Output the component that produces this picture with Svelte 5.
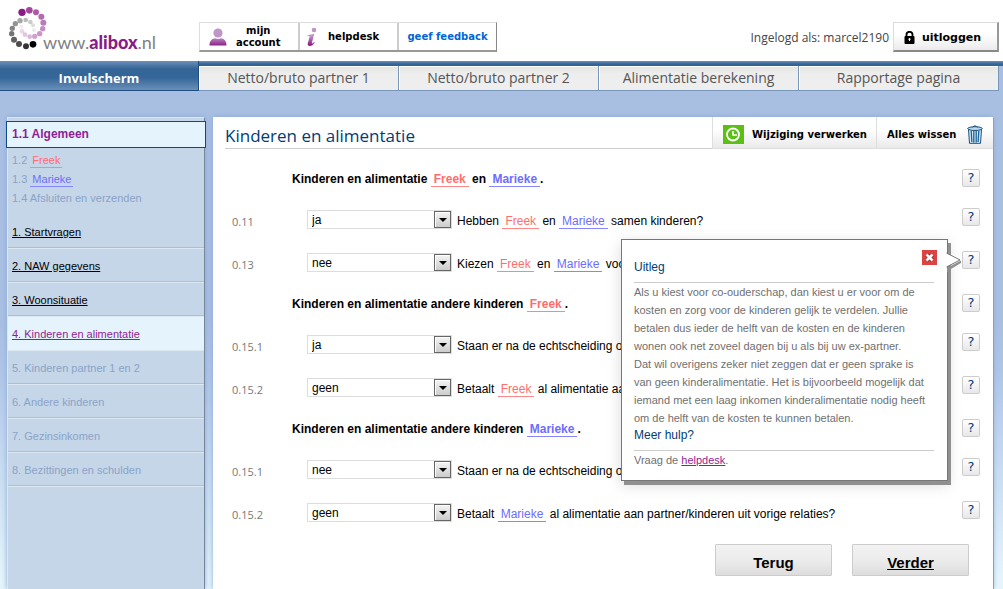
<script>
  const tabs = ['Netto/bruto partner 1', 'Netto/bruto partner 2', 'Alimentatie berekening', 'Rapportage pagina'];

  const steps = [
    { label: '1. Startvragen', state: 'done' },
    { label: '2. NAW gegevens', state: 'done' },
    { label: '3. Woonsituatie', state: 'done' },
    { label: '4. Kinderen en alimentatie', state: 'current' },
    { label: '5. Kinderen partner 1 en 2', state: 'locked' },
    { label: '6. Andere kinderen', state: 'locked' },
    { label: '7. Gezinsinkomen', state: 'locked' },
    { label: '8. Bezittingen en schulden', state: 'locked' }
  ];

  const answers = ['ja', 'nee', 'geen'];

  // Text parts written as {Name} are drawn as partner tags.
  const sections = [
    {
      title: ['Kinderen en alimentatie ', '{Freek}', ' en ', '{Marieke}', '.'],
      questions: [
        { nr: '0.11', value: 'ja', text: ['Hebben ', '{Freek}', ' en ', '{Marieke}', ' samen kinderen?'] },
        { nr: '0.13', value: 'nee', text: ['Kiezen ', '{Freek}', ' en ', '{Marieke}', ' voor co-ouderschap?'], open: true }
      ]
    },
    {
      title: ['Kinderen en alimentatie andere kinderen ', '{Freek}', '.'],
      questions: [
        { nr: '0.15.1', value: 'ja', text: ['Staan er na de echtscheiding op uw adres kinderen ingeschreven?'] },
        { nr: '0.15.2', value: 'geen', text: ['Betaalt ', '{Freek}', ' al alimentatie aan partner/kinderen uit vorige relaties?'] }
      ]
    },
    {
      title: ['Kinderen en alimentatie andere kinderen ', '{Marieke}', '.'],
      questions: [
        { nr: '0.15.1', value: 'nee', text: ['Staan er na de echtscheiding op uw adres kinderen ingeschreven?'] },
        { nr: '0.15.2', value: 'geen', text: ['Betaalt ', '{Marieke}', ' al alimentatie aan partner/kinderen uit vorige relaties?'] }
      ]
    }
  ];

  let showHelp = $state(true);

  const purpleDots = [
    [66, 37, 11, 1], [88, 31, 10, 0.8], [108, 37, 9, 0.72], [124, 50, 9, 0.65], [130, 68, 9, 0.58],
    [128, 86, 8, 0.5], [119, 101, 8, 0.45], [104, 109, 8, 0.4], [89, 110, 7, 0.32], [75, 104, 7, 0.25],
    [66, 94, 7, 0.18], [64, 80, 6, 0.1]
  ];
  const greyDots = [
    [99, 133, 10, 1], [78, 139, 9, 0.8], [57, 132, 9, 0.7], [42, 119, 9, 0.62], [35, 101, 8, 0.55],
    [37, 85, 8, 0.48], [46, 71, 8, 0.42], [60, 62, 8, 0.35], [77, 60, 7, 0.27], [91, 66, 7, 0.2],
    [99, 76, 6, 0.14], [102, 90, 6, 0.08]
  ];
</script>

{#snippet rich(parts)}
  {#each parts as part}{#if part.startsWith('{')}<span class="tag {part.slice(1, -1).toLowerCase()}">{part.slice(1, -1)}</span>{:else}{part}{/if}{/each}
{/snippet}

<div class="page">
  <header class="top">
    <a class="logo" href="#home">
      <svg viewBox="24 18 120 132" width="40" height="44" aria-hidden="true">
        {#each purpleDots as [x, y, r, o]}<circle cx={x} cy={y} {r} fill="#8a1a86" opacity={o} />{/each}
        {#each greyDots as [x, y, r, o]}<circle cx={x} cy={y} {r} fill="#000" opacity={o} />{/each}
      </svg>
      <span class="site">www.<b>alibox</b>.nl</span>
    </a>
    <div class="links">
      <a class="account" href="#account">
        <svg viewBox="0 0 18 18" width="18" height="18" aria-hidden="true">
          <defs>
            <linearGradient id="violet" x1="0" y1="0" x2="0" y2="18" gradientUnits="userSpaceOnUse">
              <stop offset="0.5" stop-color="#bf96c6" /><stop offset="1" stop-color="#8a1a86" />
            </linearGradient>
          </defs>
          <circle cx="9" cy="5" r="4.6" fill="url(#violet)" />
          <path d="M0.5 17.5C0.5 12.5 3 10.6 6 10.2Q9 11.8 12 10.2C15 10.6 17.5 12.5 17.5 17.5Z" fill="url(#violet)" />
        </svg>
        <span>mijn<br />account</span>
      </a>
      <a class="help-desk" href="#helpdesk">
        <svg viewBox="0 0 12 20" width="12" height="20" aria-hidden="true">
          <circle cx="8" cy="3" r="2.3" fill="#bf96c6" />
          <path d="M1.5 8.2L8.3 6.8L5.8 16.2C5.7 17 6.6 16.6 8.1 14.9L8.8 15.4C7.2 17.8 5.5 18.9 3.6 18.9C1.9 18.9 1.4 17.8 1.8 16.3L3.6 9.8C3.8 9 3.3 8.8 1.4 8.9Z" fill="url(#violet)" />
        </svg>
        <span>helpdesk</span>
      </a>
      <a class="feedback" href="#feedback">geef feedback</a>
    </div>
    <span class="user">Ingelogd als: marcel2190</span>
    <button class="logout" type="button">
      <svg viewBox="0 0 11 13" width="11" height="13" aria-hidden="true">
        <path d="M2.5 6V3.8A3 3 0 0 1 8.5 3.8V6" fill="none" stroke="#000" stroke-width="1.8" />
        <rect x="0.5" y="5" width="10" height="8" rx="1" />
        <path d="M5.5 7v3M4.3 8.2h2.4" stroke="#fff" stroke-width="1" />
      </svg>
      uitloggen
    </button>
  </header>

  <nav class="tabs">
    <a class="active" href="#invul">Invulscherm</a>
    {#each tabs as tab}<a href="#tab">{tab}</a>{/each}
  </nav>

  <div class="body">
    <aside>
      <a class="general" href="#algemeen">1.1 Algemeen</a>
      <ul class="sub">
        <li>1.2 <span class="tag freek">Freek</span></li>
        <li>1.3 <span class="tag marieke">Marieke</span></li>
        <li>1.4 Afsluiten en verzenden</li>
      </ul>
      <ul class="steps">
        {#each steps as step}
          <li class={step.state}>
            {#if step.state === 'locked'}{step.label}{:else}<a href="#stap">{step.label}</a>{/if}
          </li>
        {/each}
      </ul>
    </aside>

    <main>
      <div class="head">
        <h1>Kinderen en alimentatie</h1>
        <button class="process" type="button">
          <svg viewBox="0 0 21 19" width="21" height="19" aria-hidden="true">
            <rect width="21" height="19" fill="#5bbf14" />
            <circle cx="10" cy="9.5" r="6" fill="none" stroke="#fff" stroke-width="1.8" />
            <path d="M10 6v4h4" fill="none" stroke="#fff" stroke-width="1.6" />
          </svg>
          Wijziging verwerken
        </button>
        <button class="clear" type="button">
          Alles wissen
          <svg viewBox="0 0 16 19" width="16" height="19" aria-hidden="true">
            <path d="M1.5 4.5L2.5 18.3H13.5L14.5 4.5Z" fill="#d9eaf6" stroke="#174f7d" />
            <path d="M4.2 6L4.9 17M6.8 6V17.5M9.2 6V17.5M11.8 6L11.1 17" stroke="#1c6299" stroke-width="1.3" />
            <ellipse cx="8" cy="3.6" rx="7.3" ry="1.9" fill="#b9d6ea" stroke="#174f7d" />
            <path d="M5.5 2.5Q8 -0.8 10.5 2.5" fill="none" stroke="#174f7d" />
          </svg>
        </button>
      </div>

      <form onsubmit={(e) => e.preventDefault()}>
        {#each sections as section, s}
          <div class="row title">
            <h2>{@render rich(section.title)}</h2>
            <div class="hint"><button type="button" aria-label="Uitleg">?</button></div>
          </div>
          {#each section.questions as q, i}
            <div class="row">
              <span class="nr">{q.nr}</span>
              <span class="pick">
                <select id="q{s}{i}" value={q.value}>
                  {#each answers as answer}<option>{answer}</option>{/each}
                </select>
              </span>
              <label for="q{s}{i}">{@render rich(q.text)}</label>
              <div class="hint">
                <button type="button" aria-label="Uitleg" onclick={() => q.open && (showHelp = !showHelp)}>?</button>
                {#if q.open && showHelp}
                  <section class="popup">
                    <svg class="pointer" viewBox="0 0 16 20" width="16" height="20" aria-hidden="true">
                      <path d="M1 16L15 8.5V11L4 17.5V20H1Z" fill="#909090" />
                      <path d="M0 1L14 8L0 15Z" fill="#fff" />
                      <path d="M0.5 1L14 8L0.5 15" fill="none" stroke="#777" />
                    </svg>
                    <button class="close" type="button" aria-label="Sluiten" onclick={() => (showHelp = false)}>
                      <svg viewBox="0 0 15 15" width="15" height="15" aria-hidden="true">
                        <path d="M4.5 4.5L10.5 10.5M10.5 4.5L4.5 10.5" stroke="#a02524" stroke-width="4.2" />
                        <path d="M4.5 4.5L10.5 10.5M10.5 4.5L4.5 10.5" stroke="#fff" stroke-width="2.6" />
                      </svg>
                    </button>
                    <h3>Uitleg</h3>
                    <p>
                      Als u kiest voor co-ouderschap, dan kiest u er voor om de kosten en zorg voor de kinderen
                      gelijk te verdelen. Jullie betalen dus ieder de helft van de kosten en de kinderen wonen ook
                      net zoveel dagen bij u als bij uw ex-partner.<br />Dat wil overigens zeker niet zeggen dat er
                      geen sprake is van geen kinderalimentatie. Het is bijvoorbeeld mogelijk dat iemand met een
                      laag inkomen kinderalimentatie nodig heeft om de helft van de kosten te kunnen betalen.
                    </p>
                    <h3 class="more">Meer hulp?</h3>
                    <p>Vraag de <a href="#helpdesk">helpdesk</a>.</p>
                  </section>
                {/if}
              </div>
            </div>
          {/each}
        {/each}
        <div class="buttons">
          <button type="button">Terug</button>
          <button type="submit" class="next">Verder</button>
        </div>
      </form>
    </main>
  </div>
</div>

<style>
  :global(body) {
    margin: 0;
    background: #fff;
    font-family: "Liberation Sans", Arial, sans-serif;
    font-size: 12px;
  }
  *, *::before, *::after { box-sizing: border-box; }
  ul, h1, h2, h3, p { margin: 0; padding: 0; list-style: none; }
  button { font: inherit; color: #000; cursor: pointer; }
  svg { flex: none; display: block; }

  .page {
    min-height: 100vh;
    display: flex;
    flex-direction: column;
    background: linear-gradient(#a8bfe2 320px, #aec5e8 370px, #e4f5fc 580px);
  }

  .top {
    display: flex;
    align-items: flex-start;
    height: 61px;
    padding: 0 4px 0 8px;
    background: #fff;
  }
  .logo {
    display: flex;
    width: 191px;
    padding-top: 6px;
    color: #808080;
    text-decoration: none;
  }
  .site {
    margin: 24px 0 0 -5px;
    font: 18px/24px Lato, "Liberation Sans", sans-serif;
  }
  .site b { color: #8a1a86; font-weight: 900; }
  .links {
    display: flex;
    height: 30px;
    margin-top: 22px;
    border: 1px solid #ddd;
    border-right-color: #888;
    border-bottom: 2px solid #999;
  }
  .links a {
    display: flex;
    align-items: center;
    width: 99px;
    font: bold 10px/12px "DejaVu Sans", Verdana, sans-serif;
    color: #000;
    text-decoration: none;
    text-align: center;
  }
  .links a + a { border-left: 2px solid #ccc; }
  .links .account { width: 98px; padding-left: 9px; gap: 9px; }
  .help-desk { padding-left: 6px; gap: 10px; }
  .links .feedback { color: #0066d6; justify-content: center; }
  .user {
    margin: 30px 4px 0 auto;
    font: 12px/16px "Open Sans", sans-serif;
    color: #444;
  }
  .logout {
    display: flex;
    align-items: center;
    justify-content: center;
    gap: 7px;
    width: 106px;
    height: 30px;
    margin-top: 22px;
    padding: 2px 6px 0 0;
    border: 1px solid #ddd;
    border-right: 2px solid #999;
    border-bottom: 2px solid #888;
    background: linear-gradient(#fff 40%, #ebebeb);
    font: bold 11px/16px "DejaVu Sans", Verdana, sans-serif;
  }

  .tabs {
    display: flex;
    height: 31px;
    padding: 5px 4px 0 0;
    background: linear-gradient(#6d90bb, #336496 3px, #336496 5px, transparent 5px);
  }
  .tabs a {
    flex: 1;
    height: 25px;
    border: solid #7897ba;
    border-width: 0 1px 1px 0;
    background: linear-gradient(#e4e4e2, #eee 8px);
    color: #555;
    font: 14px/24px "Open Sans", sans-serif;
    text-align: center;
    text-decoration: none;
    box-shadow: inset 1px 1px #fff;
  }
  .tabs .active {
    flex: none;
    width: 199px;
    height: 30px;
    margin-top: -5px;
    border-color: #1f4f80;
    background: linear-gradient(#6d90bb, #336496 8px, #36679a 17px, #6b8fb8);
    color: #fff;
    font-size: 13px;
    font-weight: 700;
    line-height: 34px;
    box-shadow: none;
  }

  .body {
    flex: 1;
    display: flex;
    padding: 25px 10px 0 7px;
  }
  aside {
    flex: none;
    width: 198px;
    margin-right: 8px;
    padding-top: 3px;
    border-top: 1px solid #dbe7f2;
    border-left: 1px solid #dbe7f2;
    border-right: 1px solid #75859b;
    background: #c5d6e8;
    box-shadow: 0 0 5px #8ca8d4;
    font-size: 11px;
    color: #8ba3c7;
  }
  .general {
    display: block;
    margin: 0 -2px 3px;
    padding-left: 5px;
    border: 1px solid #0f4a84;
    background: #e5f4fc;
    color: #901e92;
    font-weight: bold;
    font-size: 12px;
    line-height: 25px;
    text-decoration: none;
  }
  .sub { padding: 0 4px 7px; line-height: 19px; }
  .steps li {
    height: 34px;
    padding: 0 4px;
    border-bottom: 1px solid #dce8f2;
    box-shadow: inset 0 -1px #a8bfe0;
    line-height: 34px;
  }
  .steps a { color: #000; }
  .steps .current { background: #e5f4fc; box-shadow: none; }
  .steps .current a { color: #901e92; }

  .tag { padding: 0 3px; border-bottom: 1px solid; }
  .freek { color: #ff6d6d; border-color: #ff8686; }
  .marieke { color: #6d6dff; border-color: #8686ff; }
  .sub .tag { padding: 0 2px 1px; }

  main {
    flex: 1;
    min-width: 0;
    background: #fff;
    box-shadow: 1px 1px #8f9fc0, 0 0 5px #8ca8d4;
  }
  .head { display: flex; height: 32px; margin-left: 12px; }
  h1 {
    flex: 1;
    border-bottom: 1px solid #ccc;
    font: 17px/37px "Open Sans", sans-serif;
    color: #003c78;
  }
  .head button {
    display: flex;
    align-items: center;
    padding: 4px 10px 0;
    border: solid #ddd;
    border-width: 0 0 1px 1px;
    background: linear-gradient(#fff 40%, #eaeaea);
    font: bold 10px/14px "DejaVu Sans", Verdana, sans-serif;
    white-space: nowrap;
  }
  .head .process { gap: 8px; width: 164px; }
  .head .clear { justify-content: space-between; width: 117px; }

  form { padding: 20px 13px 12px 19px; }
  .row { display: flex; align-items: flex-start; height: 43px; }
  .row.title { height: 39px; padding-left: 60px; }
  h2 { flex: 1; font-size: 12px; line-height: 20px; }
  .nr {
    width: 75px;
    padding-top: 5px;
    font: 11px/18px "Open Sans", sans-serif;
    color: #777;
  }
  .pick { position: relative; width: 145px; padding-top: 2px; }
  .pick::before, .pick::after { content: ""; position: absolute; pointer-events: none; }
  .pick::before {
    top: 3px;
    right: 1px;
    width: 17px;
    height: 17px;
    border: 1px solid #666;
    background: linear-gradient(#f4f4f4, #ccc);
    box-shadow: inset 1px 1px #fff;
  }
  .pick::after {
    top: 10px;
    right: 5px;
    border: solid transparent;
    border-width: 4px 4px 0;
    border-top-color: #000;
  }
  select {
    display: block;
    width: 100%;
    height: 19px;
    padding: 0 4px;
    border: 1px solid #ddd;
    border-radius: 0;
    appearance: none;
    background: #fff;
    font: inherit;
    color: #000;
  }
  label { flex: 1; min-width: 0; padding: 4px 0 0 5px; line-height: 18px; white-space: nowrap; }
  .hint { position: relative; }
  .hint > button {
    display: block;
    width: 18px;
    height: 18px;
    padding: 0;
    border: 1px solid #ccc;
    border-radius: 2px;
    background: linear-gradient(#fff, #e8e8e8);
    color: #003c78;
    font: 13px/16px "DejaVu Sans", Verdana, sans-serif;
  }

  .popup {
    position: absolute;
    top: -12px;
    right: 32px;
    z-index: 1;
    width: 327px;
    padding: 18px 13px 11px 12px;
    border: 1px solid #777;
    background: #fff;
    box-shadow: 3px 4px #909090, 0 4px 14px rgba(0, 0, 0, 0.15);
  }
  .pointer { position: absolute; top: 12px; right: -15px; }
  .close {
    position: absolute;
    top: 10px;
    right: 10px;
    padding: 0;
    border: 0;
    background: #dc4443;
  }
  h3 {
    padding-bottom: 6px;
    border-bottom: 1px solid #ccc;
    font-size: 12px;
    font-weight: normal;
    line-height: 18px;
    color: #003c78;
  }
  .more { padding-bottom: 7px; line-height: 16px; }
  .popup p { font-size: 11px; line-height: 18px; color: #707070; }
  .popup a { color: #901e92; }

  .buttons { display: flex; justify-content: flex-end; gap: 20px; padding-right: 11px; }
  .buttons button {
    width: 117px;
    height: 32px;
    padding: 4px 0 0;
    border: 1px solid #ccc;
    border-radius: 1px;
    background: linear-gradient(#f2f2f2, #ececec 50%, #ddd);
    font-weight: bold;
    font-size: 15px;
  }
  .buttons .next { text-decoration: underline; }
</style>
